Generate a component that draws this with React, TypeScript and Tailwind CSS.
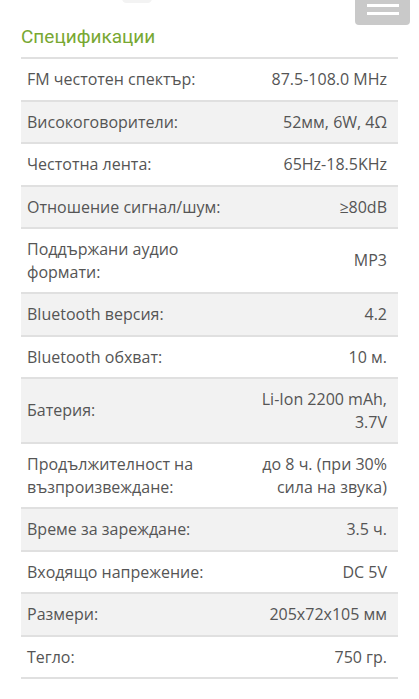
const specs: [string, string][] = [
  ["FM честотен спектър:", "87.5-108.0 MHz"],
  ["Високоговорители:", "52мм, 6W, 4Ω"],
  ["Честотна лента:", "65Hz-18.5KHz"],
  ["Отношение сигнал/шум:", "≥80dB"],
  ["Поддържани аудио формати:", "MP3"],
  ["Bluetooth версия:", "4.2"],
  ["Bluetooth обхват:", "10 м."],
  ["Батерия:", "Li-Ion 2200 mAh, 3.7V"],
  ["Продължителност на възпроизвеждане:", "до 8 ч. (при 30% сила на звука)"],
  ["Време за зареждане:", "3.5 ч."],
  ["Входящо напрежение:", "DC 5V"],
  ["Размери:", "205x72x105 мм"],
  ["Тегло:", "750 гр."],
];

export default function App() {
  return (
    <div className="relative min-h-[699px] bg-white font-['Open_Sans',sans-serif] text-[#555]">
      {/* faint shape peeking from the header */}
      <div className="absolute left-[122px] top-[-6px] h-[9px] w-[30px] rounded-full bg-[#f3f3f3]" />

      {/* menu button */}
      <button className="absolute right-[9px] top-0 flex h-[25px] w-[55px] flex-col items-center justify-end gap-[5px] rounded-b-[4px] bg-[#c9c9c9] pb-[10px]">
        <span className="block h-[3px] w-[32px] bg-white" />
        <span className="block h-[3px] w-[32px] bg-white" />
      </button>

      <div className="px-[21px] pt-[24px]">
        <h2 className="mb-[8px] font-['Roboto',sans-serif] text-[19px] leading-[25px] text-[#78a832]">
          Спецификации
        </h2>

        <div className="border-t-2 border-[#e0e0e0]">
          {specs.map(([label, value], i) => (
            <div
              key={label}
              className={
                "grid grid-cols-[55%_45%] border-b-2 border-[#e0e0e0] text-[16px] leading-[22.5px] " +
                (i % 2 === 1 ? "bg-[#f2f2f2]" : "bg-white")
              }
            >
              <div className="flex items-center pb-[9px] pl-[6px] pt-[9px]">{label}</div>
              <div className="flex items-center justify-end pb-[9px] pr-[11px] pt-[9px] text-right">
                {value}
              </div>
            </div>
          ))}
        </div>
      </div>
    </div>
  );
}
